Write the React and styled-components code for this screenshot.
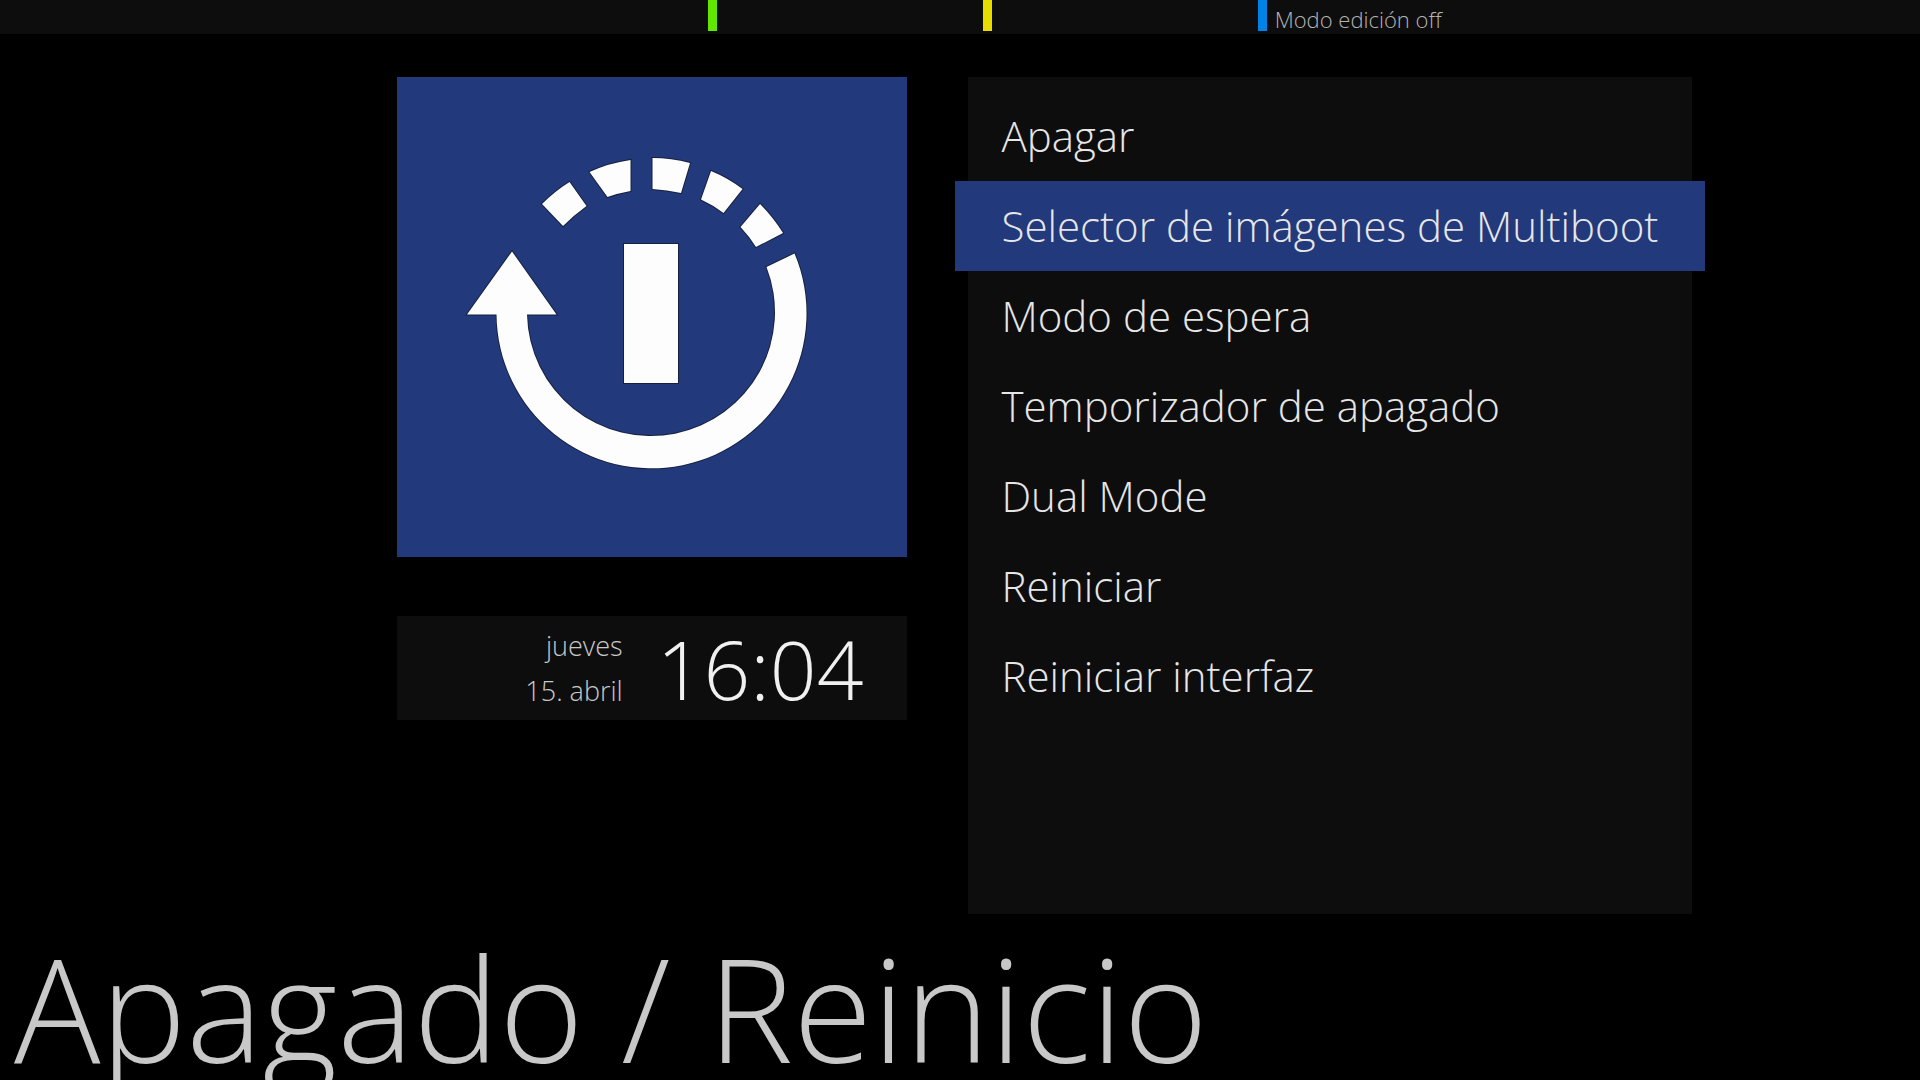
import React, { useState } from "react";
import styled, { createGlobalStyle } from "styled-components";

const GlobalStyle = createGlobalStyle`
  * {
    box-sizing: border-box;
  }
  body {
    margin: 0;
    background: #000;
    color: #e6e6e6;
    font-family: "Open Sans", "Noto Sans", sans-serif;
    font-weight: 300;
  }
`;

const Screen = styled.div`
  display: flex;
  flex-direction: column;
  height: 100vh;
  overflow: hidden;
`;

const KeyBar = styled.header`
  display: grid;
  grid-template-columns: 274fr 275fr 662fr;
  height: 34px;
  padding-left: 36.9%;
  background: #0d0d0d;
`;

const ColorKey = styled.button`
  display: flex;
  align-items: center;
  height: 31px;
  padding: 6px 0 0 8px;
  border: 0;
  border-left: 9px solid ${(props) => props.$color};
  background: none;
  color: #b4b4b4;
  font: inherit;
  font-size: 22px;
  line-height: 24px;
`;

const Content = styled.main`
  flex: 1;
  display: grid;
  grid-template-columns: minmax(0, 510fr) minmax(0, 723fr);
  column-gap: 61px;
  min-height: 0;
  padding: 43px 11.9% 0 20.7%;
`;

const Side = styled.div`
  display: flex;
  flex-direction: column;
  gap: 59px;
`;

const Tile = styled.svg`
  display: block;
  width: 100%;
  background: #22397b;
`;

const Clock = styled.div`
  display: flex;
  align-items: center;
  justify-content: flex-end;
  gap: 34px;
  height: 104px;
  padding-right: 44px;
  background: #0d0d0d;
`;

const DateText = styled.div`
  color: #c8c8c8;
  font-size: 27px;
  line-height: 45px;
  text-align: right;
`;

const Time = styled.time`
  color: #f0f0f0;
  font-size: 82px;
  line-height: 104px;
`;

const Menu = styled.ul`
  margin: 0;
  padding: 14px 0;
  background: #0d0d0d;
  list-style: none;
`;

const MenuItem = styled.li`
  margin: 0 -13px;
`;

const MenuButton = styled.button`
  display: block;
  width: 100%;
  height: 90px;
  padding: 0 46px;
  border: 0;
  outline: 0;
  background: ${(props) => (props.$active ? "#22397b" : "none")};
  color: inherit;
  font: inherit;
  font-size: 42px;
  line-height: 60px;
  text-align: left;
  white-space: nowrap;
`;

const Title = styled.h1`
  height: 166px;
  margin: 0;
  padding-left: 14px;
  color: #c8c8c8;
  font-size: 144px;
  font-weight: 300;
  line-height: 186px;
  white-space: nowrap;
`;

const keys = [
  { color: "#61e600", name: "Verde" },
  { color: "#e6dc00", name: "Amarillo" },
  { color: "#0082e6", label: "Modo edición off" },
];

const options = [
  "Apagar",
  "Selector de imágenes de Multiboot",
  "Modo de espera",
  "Temporizador de apagado",
  "Dual Mode",
  "Reiniciar",
  "Reiniciar interfaz",
];

const RestartIcon = () => (
  <Tile viewBox="0 0 510 480" aria-hidden="true">
    <g fill="#fdfdfd" stroke="#17213f" strokeWidth="2" paintOrder="stroke">
      <path d="M145 127Q158 114 172.500 105L189.500 129Q177 138 166 149Z" />
      <path d="M192.500 95Q212 86 233.500 83V114Q222 116 210.500 120Z" />
      <path d="M255.500 81Q274 81 293 86L284 116Q270 113 255.500 112Z" />
      <path d="M314 94Q331 101 345.500 112L326.500 136Q316 128 304 122.500Z" />
      <path d="M363 127Q376 140 386 156L359 170Q352 159 343.500 150Z" />
      <path d="M397.500 176.500A155 155 0 1 1 99.500 237.500H70L115 174.500L159.500 237.500H130A124 124 0 1 0 369.500 190Z" />
      <path d="M227 167H281V306H227Z" />
    </g>
  </Tile>
);

const App = () => {
  const [selected, setSelected] = useState(1);

  return (
    <>
      <GlobalStyle />
      <Screen>
        <KeyBar>
          {keys.map((key) => (
            <ColorKey key={key.color} $color={key.color} aria-label={key.name}>
              {key.label}
            </ColorKey>
          ))}
        </KeyBar>
        <Content>
          <Side>
            <RestartIcon />
            <Clock>
              <DateText>
                <div>jueves</div>
                <div>15. abril</div>
              </DateText>
              <Time>16:04</Time>
            </Clock>
          </Side>
          <Menu>
            {options.map((option, index) => (
              <MenuItem key={option}>
                <MenuButton
                  $active={index === selected}
                  onClick={() => setSelected(index)}
                >
                  {option}
                </MenuButton>
              </MenuItem>
            ))}
          </Menu>
        </Content>
        <Title>Apagado / Reinicio</Title>
      </Screen>
    </>
  );
};

export default App;
